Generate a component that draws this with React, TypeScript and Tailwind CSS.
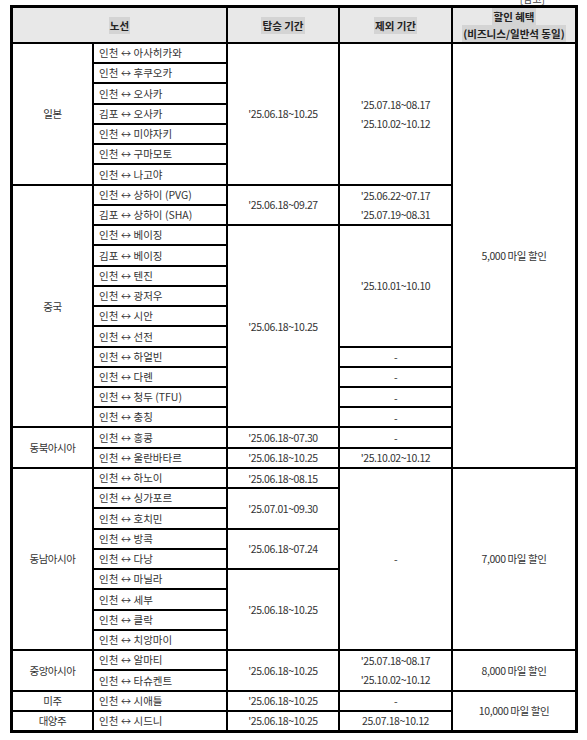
import React from 'react';

const font = { fontFamily: '"Noto Sans CJK KR", "Noto Sans", sans-serif' };

function Route({ children }: { children: React.ReactNode }) {
  return (
    <div className="bg-white flex items-center pl-[5px] text-[10.5px] text-[#333] whitespace-nowrap">
      {children}
    </div>
  );
}

function Cell({ className = '', children }: { className?: string; children?: React.ReactNode }) {
  return (
    <div className={`bg-white flex flex-col items-center justify-center text-[10.5px] text-[#333] leading-[19px] tracking-[-0.04em] whitespace-nowrap ${className}`}>
      {children}
    </div>
  );
}

function Head({ className = '', children }: { className?: string; children: React.ReactNode }) {
  return (
    <div className={`bg-[#e8e8e8] flex flex-col items-center justify-center text-[10.5px] font-bold text-[#222] leading-[17px] ${className}`}>
      {children}
    </div>
  );
}

const arrow = ' ↔ ';

export default function App() {
  return (
    <div className="w-[587px] h-[740px] bg-white" style={font}>
      {/* cut-off note at the very top */}
      <div className="h-[5px] overflow-hidden flex justify-end pr-[42px]">
        <span className="text-[10px] text-[#444] -mt-[9px]">[참고]</span>
      </div>

      <div className="ml-[10px] w-[568px] h-[728px] bg-black p-[3px] grid gap-[2px] grid-cols-[79px_132px_110px_111px_122px] grid-rows-[34px_repeat(34,minmax(0,1fr))]">
        {/* header */}
        <Head className="col-span-2"><span className="bg-[#d4d4d4] px-[1px]">노선</span></Head>
        <Head><span className="bg-[#d4d4d4] px-[1px]">탑승 기간</span></Head>
        <Head><span className="bg-[#d4d4d4] px-[1px]">제외 기간</span></Head>
        <Head>
          <span className="bg-[#d4d4d4] px-[1px]">할인 혜택</span>
          <span className="bg-[#d4d4d4] px-[1px]">(비즈니스/일반석 동일)</span>
        </Head>

        {/* 일본 */}
        <Cell className="row-span-7">일본</Cell>
        <Route>인천{arrow}아사히카와</Route>
        <Cell className="row-span-7">'25.06.18~10.25</Cell>
        <Cell className="row-span-7">
          <span>'25.07.18~08.17</span>
          <span>'25.10.02~10.12</span>
        </Cell>
        <Cell className="row-span-21">5,000 마일 할인</Cell>
        <Route>인천{arrow}후쿠오카</Route>
        <Route>인천{arrow}오사카</Route>
        <Route>김포{arrow}오사카</Route>
        <Route>인천{arrow}미야자키</Route>
        <Route>인천{arrow}구마모토</Route>
        <Route>인천{arrow}나고야</Route>

        {/* 중국 */}
        <Cell className="row-span-12">중국</Cell>
        <Route>인천{arrow}상하이 (PVG)</Route>
        <Cell className="row-span-2">'25.06.18~09.27</Cell>
        <Cell className="row-span-2">
          <span>'25.06.22~07.17</span>
          <span>'25.07.19~08.31</span>
        </Cell>
        <Route>김포{arrow}상하이 (SHA)</Route>
        <Route>인천{arrow}베이징</Route>
        <Cell className="row-span-10">'25.06.18~10.25</Cell>
        <Cell className="row-span-6">'25.10.01~10.10</Cell>
        <Route>김포{arrow}베이징</Route>
        <Route>인천{arrow}텐진</Route>
        <Route>인천{arrow}광저우</Route>
        <Route>인천{arrow}시안</Route>
        <Route>인천{arrow}선전</Route>
        <Route>인천{arrow}하얼빈</Route>
        <Cell>-</Cell>
        <Route>인천{arrow}다롄</Route>
        <Cell>-</Cell>
        <Route>인천{arrow}청두 (TFU)</Route>
        <Cell>-</Cell>
        <Route>인천{arrow}충칭</Route>
        <Cell>-</Cell>

        {/* 동북아시아 */}
        <Cell className="row-span-2">동북아시아</Cell>
        <Route>인천{arrow}홍콩</Route>
        <Cell>'25.06.18~07.30</Cell>
        <Cell>-</Cell>
        <Route>인천{arrow}울란바타르</Route>
        <Cell>'25.06.18~10.25</Cell>
        <Cell>'25.10.02~10.12</Cell>

        {/* 동남아시아 */}
        <Cell className="row-span-9">동남아시아</Cell>
        <Route>인천{arrow}하노이</Route>
        <Cell>'25.06.18~08.15</Cell>
        <Cell className="row-span-9">-</Cell>
        <Cell className="row-span-9">7,000 마일 할인</Cell>
        <Route>인천{arrow}싱가포르</Route>
        <Cell className="row-span-2">'25.07.01~09.30</Cell>
        <Route>인천{arrow}호치민</Route>
        <Route>인천{arrow}방콕</Route>
        <Cell className="row-span-2">'25.06.18~07.24</Cell>
        <Route>인천{arrow}다낭</Route>
        <Route>인천{arrow}마닐라</Route>
        <Cell className="row-span-4">'25.06.18~10.25</Cell>
        <Route>인천{arrow}세부</Route>
        <Route>인천{arrow}클락</Route>
        <Route>인천{arrow}치앙마이</Route>

        {/* 중앙아시아 */}
        <Cell className="row-span-2">중앙아시아</Cell>
        <Route>인천{arrow}알마티</Route>
        <Cell className="row-span-2">'25.06.18~10.25</Cell>
        <Cell className="row-span-2">
          <span>'25.07.18~08.17</span>
          <span>'25.10.02~10.12</span>
        </Cell>
        <Cell className="row-span-2">8,000 마일 할인</Cell>
        <Route>인천{arrow}타슈켄트</Route>

        {/* 미주 / 대양주 */}
        <Cell>미주</Cell>
        <Route>인천{arrow}시애틀</Route>
        <Cell>'25.06.18~10.25</Cell>
        <Cell>-</Cell>
        <Cell className="row-span-2">10,000 마일 할인</Cell>
        <Cell>대양주</Cell>
        <Route>인천{arrow}시드니</Route>
        <Cell>'25.06.18~10.25</Cell>
        <Cell>25.07.18~10.12</Cell>
      </div>
    </div>
  );
}
